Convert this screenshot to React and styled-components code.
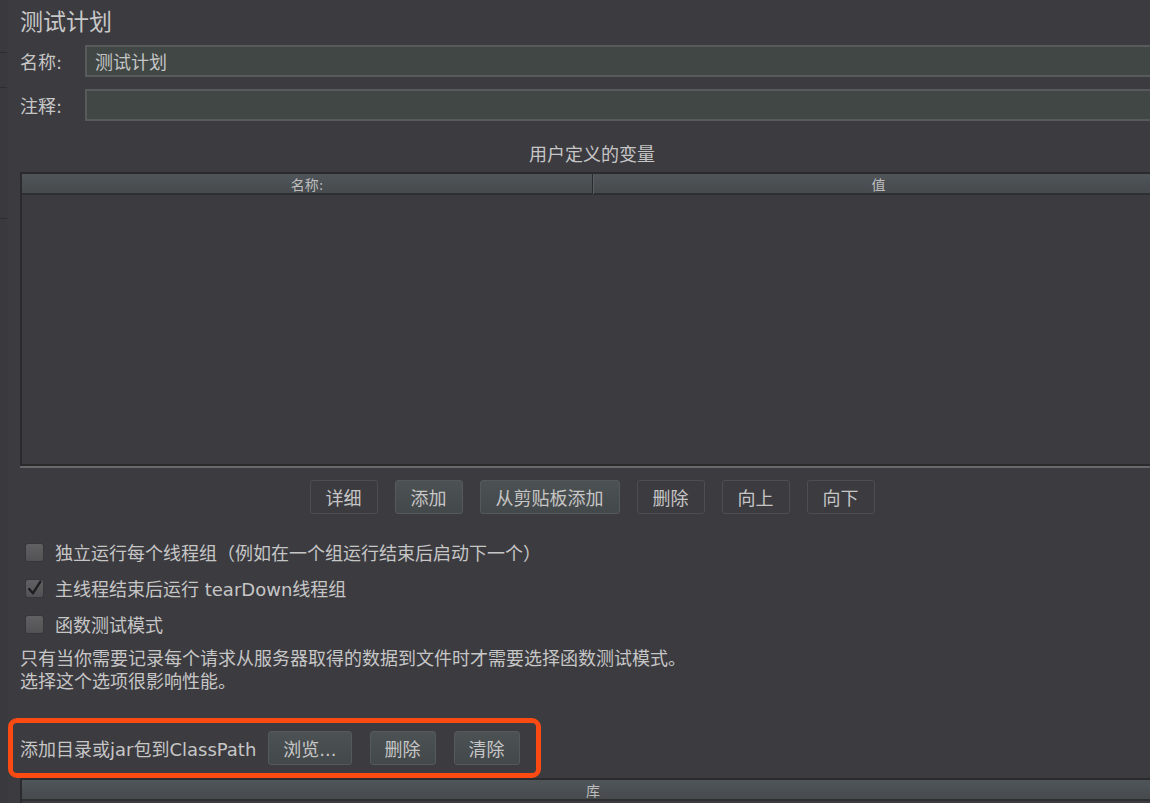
import styled, { createGlobalStyle } from "styled-components";

const GlobalStyle = createGlobalStyle`
  * {
    margin: 0;
    padding: 0;
    box-sizing: border-box;
  }
  html, body {
    background-color: #3c3b40;
    overflow: hidden;
  }
  body {
    font-family: "DejaVu Sans", "Noto Sans CJK SC", sans-serif;
    color: #c6c6c6;
  }
`;

const Pagina = styled.div`
  display: flex;
  width: 100vw;
  height: 100vh;
  overflow: hidden;
`;

const Margem = styled.div`
  flex: none;
  width: 8px;
  display: flex;
  flex-direction: column;
  background-color: #3a393d;
`;

const Risco = styled.div`
  width: 7px;
  height: 1px;
  margin-top: ${(p) => p.$top}px;
  background-color: #2e2e32;
`;

const Painel = styled.div`
  flex: none;
  width: 1156px;
  padding-left: 12px;
  display: flex;
  flex-direction: column;

  & > * {
    flex-shrink: 0;
  }
`;

const Titulo = styled.h1`
  margin-top: 6px;
  font-family: "Noto Sans CJK SC", sans-serif;
  font-size: 23px;
  line-height: 28px;
  font-weight: normal;
  color: #c8c8c8;
`;

const Campo = styled.div`
  display: flex;
  align-items: center;
  height: 32px;
  margin-top: ${(p) => p.$top}px;

  label {
    width: 65px;
    flex: none;
    font-size: 18px;
  }
`;

const Entrada = styled.div`
  flex: 1;
  height: 32px;
  padding-left: 8px;
  display: flex;
  align-items: center;
  background-color: #414745;
  border: 2px solid #575b5b;
  font-size: 18px;
  color: #c4c4c4;
`;

const Secao = styled.p`
  margin-top: 22px;
  text-align: center;
  font-size: 18px;
  line-height: 24px;
`;

const Tabela = styled.div`
  display: flex;
  flex-direction: column;
  margin-top: ${(p) => p.$top}px;
  height: ${(p) => p.$altura};
  border: 2px solid #2b2b2e;
  border-right: none;
  box-shadow: ${(p) => (p.$fundo ? "0 2px 0 #69696c" : "none")};
`;

const Cabecalho = styled.div`
  display: grid;
  grid-template-columns: ${(p) => p.$colunas};
  height: 21px;
  flex: none;
  background: linear-gradient(#50555a, #464a4d);
  border-bottom: 2px solid #2d2f31;

  span {
    display: flex;
    align-items: center;
    justify-content: center;
    font-size: 14px;
    color: #bdbdbd;
  }
  span + span {
    border-left: 1px solid #2a2b2d;
    box-shadow: inset 1px 0 0 #5a5e62;
  }
`;

const Corpo = styled.div`
  flex: 1;
  background-color: #3c3b40;
`;

const Botoes = styled.div`
  display: flex;
  justify-content: center;
  gap: 17px;
  margin-top: 14px;
`;

const Botao = styled.button`
  height: 34px;
  padding: 0 ${(p) => (p.$estreito ? 14 : 15)}px;
  font-family: "DejaVu Sans", "Noto Sans CJK SC", sans-serif;
  font-size: 18px;
  color: #c6c6c6;
  border-radius: 3px;
  border: 1px solid ${(p) => (p.$cheio ? "#55595b" : "#4d4e52")};
  background: ${(p) =>
    p.$cheio ? "linear-gradient(#4c5153, #43484a)" : "#3c3b40"};
  cursor: pointer;
`;

const Opcoes = styled.div`
  display: flex;
  flex-direction: column;
  margin-top: 20px;
`;

const Opcao = styled.label`
  display: flex;
  align-items: center;
  height: 36px;
  padding-left: 5px;
  gap: 11px;
  font-size: 18px;
`;

const Caixa = styled.span`
  width: 19px;
  height: 19px;
  flex: none;
  display: flex;
  align-items: center;
  justify-content: center;
  border-radius: 3px;
  border: 1px solid #37373a;
  background: linear-gradient(#616164, #525255);
`;

const Nota = styled.p`
  margin-top: 5px;
  font-size: 18px;
  line-height: 23px;
`;

const Destaque = styled.div`
  align-self: flex-start;
  display: flex;
  align-items: center;
  margin-top: 25px;
  margin-left: -12px;
  padding: 8px 16px 8px 7px;
  border: 5px solid #fc4a13;
  border-radius: 9px;

  p {
    font-size: 18px;
    margin-right: 12px;
    white-space: nowrap;
  }
`;

const Grupo = styled.div`
  display: flex;
  gap: 18px;
`;

const Check = () => (
  <svg width="17" height="17" viewBox="0 0 16 16">
    <path
      d="M3 8.5 L6.5 12.5 L13.5 1.5"
      fill="none"
      stroke="#1e1e20"
      strokeWidth="2.2"
      strokeLinecap="round"
      strokeLinejoin="round"
    />
  </svg>
);

const opcoes = [
  { texto: "独立运行每个线程组（例如在一个组运行结束后启动下一个）", marcado: false },
  { texto: "主线程结束后运行 tearDown线程组", marcado: true },
  { texto: "函数测试模式", marcado: false },
];

const App = () => {
  return (
    <>
      <GlobalStyle />
      <Pagina>
        <Margem>
          <Risco $top={52} />
          <Risco $top={34} />
          <Risco $top={130} />
        </Margem>
        <Painel>
          <Titulo>测试计划</Titulo>
          <Campo $top={11}>
            <label>名称:</label>
            <Entrada>测试计划</Entrada>
          </Campo>
          <Campo $top={12}>
            <label>注释:</label>
            <Entrada />
          </Campo>

          <Secao>用户定义的变量</Secao>
          <Tabela $top={5} $altura="294px" $fundo>
            <Cabecalho $colunas="570px 1fr">
              <span>名称:</span>
              <span>值</span>
            </Cabecalho>
            <Corpo />
          </Tabela>

          <Botoes>
            <Botao>详细</Botao>
            <Botao $cheio>添加</Botao>
            <Botao $cheio>从剪贴板添加</Botao>
            <Botao>删除</Botao>
            <Botao>向上</Botao>
            <Botao>向下</Botao>
          </Botoes>

          <Opcoes>
            {opcoes.map((opcao) => (
              <Opcao key={opcao.texto}>
                <Caixa>{opcao.marcado && <Check />}</Caixa>
                {opcao.texto}
              </Opcao>
            ))}
          </Opcoes>

          <Nota>
            只有当你需要记录每个请求从服务器取得的数据到文件时才需要选择函数测试模式。
            <br />
            选择这个选项很影响性能。
          </Nota>

          <Destaque>
            <p>添加目录或jar包到ClassPath</p>
            <Grupo>
              <Botao $cheio $estreito>浏览...</Botao>
              <Botao $cheio $estreito>删除</Botao>
              <Botao $cheio $estreito>清除</Botao>
            </Grupo>
          </Destaque>

          <Tabela $top={0} $altura="60px">
            <Cabecalho $colunas="1fr">
              <span>库</span>
            </Cabecalho>
            <Corpo />
          </Tabela>
        </Painel>
      </Pagina>
    </>
  );
};
export default App;
